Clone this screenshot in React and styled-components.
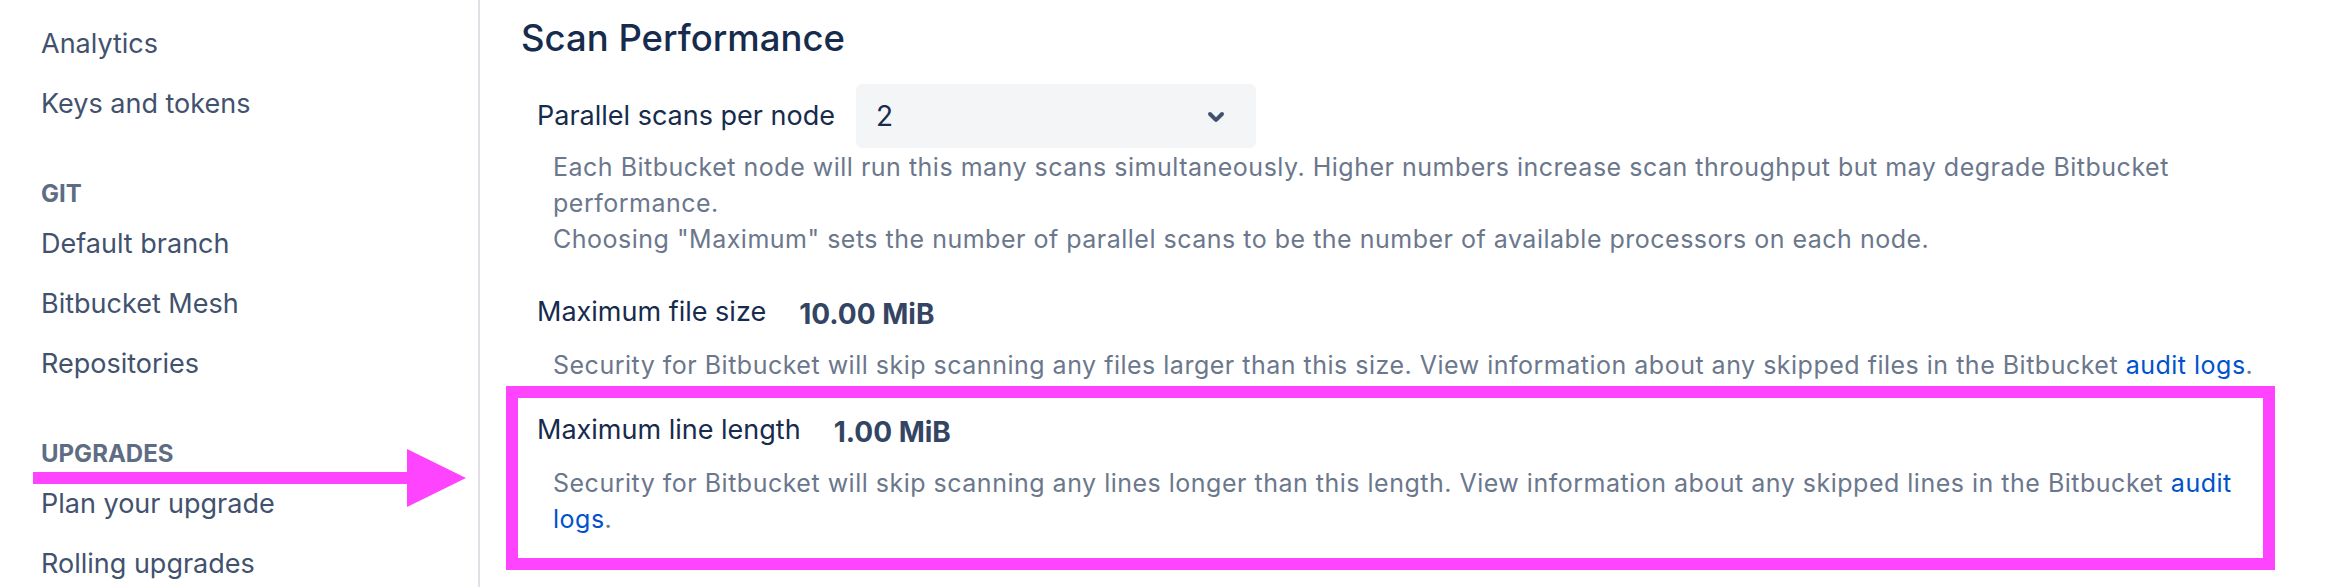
import React from "react";
import styled, { createGlobalStyle } from "styled-components";

const GlobalStyle = createGlobalStyle`
  html, body {
    margin: 0;
    padding: 0;
    background: #ffffff;
  }
  body {
    font-family: Inter, "Noto Sans", sans-serif;
    -webkit-font-smoothing: antialiased;
  }
`;

const sidebarSections = [
  { items: ["Analytics", "Keys and tokens"] },
  { title: "Git", items: ["Default branch", "Bitbucket Mesh", "Repositories"] },
  { title: "Upgrades", items: ["Plan your upgrade", "Rolling upgrades"] },
];

const App = () => {
  return (
    <Page>
      <GlobalStyle />
      <Sidebar>
        {sidebarSections.map((section, i) => (
          <NavGroup key={i}>
            {section.title && <SectionTitle>{section.title}</SectionTitle>}
            {section.items.map((item) => (
              <NavItem key={item}>{item}</NavItem>
            ))}
          </NavGroup>
        ))}
      </Sidebar>

      <Main>
        <Heading>Scan Performance</Heading>
        <Fields>
          <Field>
            <FieldRow>
              <Label>Parallel scans per node</Label>
              <Select>
                <SelectValue>2</SelectValue>
                <svg width="48" height="48" viewBox="0 0 24 24" aria-hidden="true">
                  <path
                    fill="#42526e"
                    d="M8.292 10.293a1.009 1.009 0 000 1.419l2.939 2.965c.218.215.5.322.779.322s.556-.107.769-.322l2.93-2.955a1.01 1.01 0 000-1.419.987.987 0 00-1.406 0l-2.298 2.317-2.307-2.327a.99.99 0 00-1.406 0z"
                  />
                </svg>
              </Select>
            </FieldRow>
            <Description $tight>
              Each Bitbucket node will run this many scans simultaneously. Higher numbers increase
              scan throughput but may degrade Bitbucket performance.
              <br />
              Choosing "Maximum" sets the number of parallel scans to be the number of available
              processors on each node.
            </Description>
          </Field>

          <Field>
            <FieldRow>
              <Label>Maximum file size</Label>
              <Value>10.00 MiB</Value>
            </FieldRow>
            <Description>
              Security for Bitbucket will skip scanning any files larger than this size. View
              information about any skipped files in the Bitbucket <Link href="#">audit logs</Link>.
            </Description>
          </Field>

          <Field>
            <Highlight />
            <FieldRow>
              <Label>Maximum line length</Label>
              <Value>1.00 MiB</Value>
            </FieldRow>
            <Description>
              Security for Bitbucket will skip scanning any lines longer than this length. View
              information about any skipped lines in the Bitbucket <Link href="#">audit logs</Link>.
            </Description>
          </Field>
        </Fields>
      </Main>

      <Arrow width="433" height="58" viewBox="0 0 433 58" aria-hidden="true">
        <rect x="0" y="23" width="376" height="12" fill="#ff44ff" />
        <polygon points="374,0 433,29 374,58" fill="#ff44ff" />
      </Arrow>
    </Page>
  );
};

export default App;

const Page = styled.div`
  display: flex;
  height: 587px;
  position: relative;
  overflow: hidden;
`;

const Sidebar = styled.nav`
  box-sizing: border-box;
  width: 480px;
  flex-shrink: 0;
  padding: 14px 0 0 41px;
  border-right: 2px solid #dfe1e6;
`;

const NavGroup = styled.div`
  display: flex;
  flex-direction: column;
`;

const SectionTitle = styled.div`
  margin: 44px 0 4px;
  font-size: 24px;
  line-height: 32px;
  font-weight: 700;
  text-transform: uppercase;
  color: #5e6c84;
`;

const NavItem = styled.div`
  padding: 10px 0;
  font-size: 27px;
  line-height: 40px;
  color: #42526e;
`;

const Main = styled.main`
  flex: 1;
  min-width: 0;
  padding: 16px 55px 0 41px;
`;

const Heading = styled.h2`
  margin: 0;
  font-size: 36.5px;
  line-height: 44px;
  font-weight: 500;
  color: #172b4d;
`;

const Fields = styled.div`
  display: flex;
  flex-direction: column;
  gap: 25px;
  margin-top: 24px;
  padding-left: 16px;
`;

const Field = styled.div`
  position: relative;
`;

const FieldRow = styled.div`
  display: flex;
  align-items: center;
`;

const Label = styled.div`
  font-size: 27px;
  line-height: 40px;
  color: #172b4d;
`;

const Select = styled.div`
  box-sizing: border-box;
  display: flex;
  align-items: center;
  justify-content: space-between;
  width: 400px;
  height: 64px;
  margin-left: 21px;
  padding: 0 16px 0 20px;
  border-radius: 6px;
  background: #f4f5f7;
`;

const SelectValue = styled.span`
  font-size: 28px;
  color: #172b4d;
`;

const Value = styled.div`
  margin-left: 33px;
  padding-top: 4px;
  font-size: 28px;
  line-height: 40px;
  font-weight: 700;
  color: #344563;
`;

const Description = styled.div`
  margin: ${(p) => (p.$tight ? "1px 0 8px" : "13px 0 0")};
  padding-left: 16px;
  font-size: 25px;
  letter-spacing: 0.5px;
  line-height: 36px;
  color: #6b778c;
`;

const Link = styled.a`
  color: #0052cc;
  text-decoration: none;
`;

const Highlight = styled.div`
  position: absolute;
  left: -31px;
  right: 0;
  top: -22px;
  bottom: -33px;
  border: 12px solid #ff44ff;
  pointer-events: none;
`;

const Arrow = styled.svg`
  position: absolute;
  left: 33px;
  top: 449px;
`;
